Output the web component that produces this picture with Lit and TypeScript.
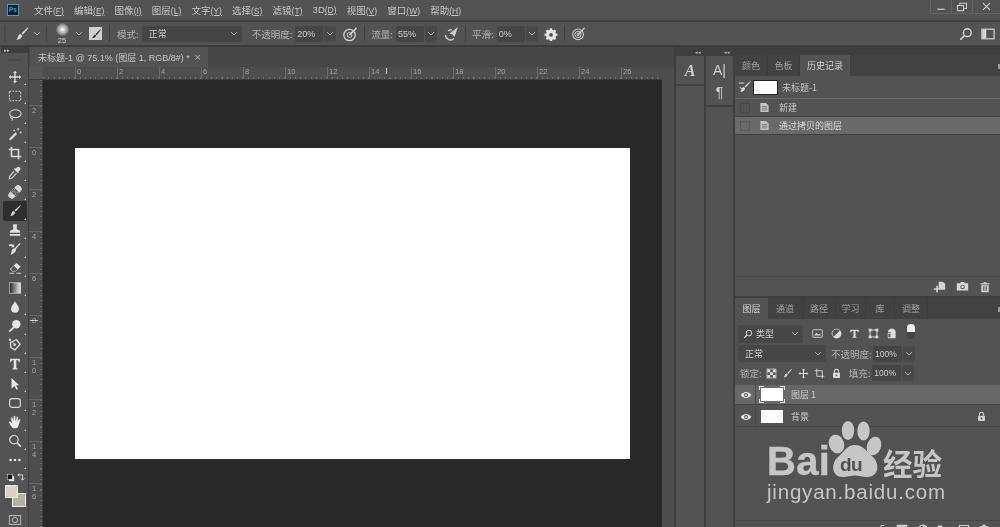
import { LitElement, html, css, svg } from "lit";
import { customElement } from "lit/decorators.js";

const s = (body: unknown, size = 16, vb = 16) => html`<svg class="ic" width=${size} height=${size} viewBox="0 0 ${vb} ${vb}">${body}</svg>`;
const brushPath = svg`<path fill="#d8d8d8" d="M13.6 1.6c.5-.3 1 .2.7.7L9 8.6 7.5 7.2zM6.7 7.9l1.5 1.5c-.2 2.2-2.5 4.2-6 4.4 1.400-1 1.400-2.200 2-3.800.4-1.100 1.300-1.900 2.500-2.100z"/>`;
const tick = html`<i class="corner"></i>`;
const moveIcon = svg`<path fill="#dcdcdc" d="M8 .8 10.300 3.400H8.800V7.200H12.600V5.700L15.200 8 12.600 10.300V8.800H8.800V12.600H10.300L8 15.200 5.700 12.600H7.200V8.800H3.400V10.300L.8 8 3.400 5.700V7.200H7.200V3.400H5.700z"/>`;

const toolIcons: unknown[] = [
  moveIcon,
  svg`<rect x="1.500" y="2.500" width="13" height="11" fill="none" stroke="#d0d0d0" stroke-width="1.200" stroke-dasharray="2 1.500"/>`,
  svg`<ellipse cx="8.500" cy="6.500" rx="6.500" ry="4.500" fill="none" stroke="#d0d0d0" stroke-width="1.300"/><path d="M4 9.500c-1.500 1-.8 2.500.5 2.300.8 0 .8 1.500-.3 2.500" fill="none" stroke="#d0d0d0" stroke-width="1.200"/>`,
  svg`<path d="M2 14.500 9.500 7" stroke="#d8d8d8" stroke-width="2.600"/><path d="M11.500 1v3M10 2.500h3M14.500 5v2.500M13.300 6.200h2.400M7 3v2M6 4h2" stroke="#e0e0e0" stroke-width=".9"/>`,
  svg`<path d="M4 .8V12H15.200M.8 4H12V15.200" fill="none" stroke="#dcdcdc" stroke-width="1.800"/>`,
  svg`<path fill="#d8d8d8" d="M10 1.800c1.200-1.400 3-1 3.700-.2.800.9.900 2.400-.4 3.600l-1.500 1.300.7.800-1.100 1-4.800-4.800 1-1.100.8.700z"/><path d="M7 5.800 2.200 11.500 1.500 14.500 4.500 13.800 9.600 8.400" fill="none" stroke="#d8d8d8" stroke-width="1.300"/>`,
  svg`<g transform="rotate(-45 8 8)"><rect x="-1" y="4" width="18" height="8" rx="3.700" fill="#d8d8d8"/><rect x="5" y="4" width="6" height="8" fill="#585858"/><path d="M6 6h1M9 6h1M7.500 8h1M6 10h1M9 10h1" stroke="#e0e0e0" stroke-width="1.100"/></g>`,
  svg`${brushPath}`,
  svg`<path fill="#e0e0e0" d="M5.800 1.500h4.400L10 6.500c0 1.300 3.800 1.500 3.800 3.500v1.200H2.200V10c0-2 3.800-2.200 3.800-3.500zM2 12.500h12V14.500H2z"/>`,
  svg`<path d="M8 8 13.800 1.500" stroke="#dcdcdc" stroke-width="1.500"/><path fill="#dcdcdc" d="M7.600 6.800l1.800 1.800c-.3 2.500-3.500 5.600-6.500 5.800 1.300-1.800 1-4 1.800-5.800zM1 3.500a3 3 0 0 1 5 0l1-1V6H3.500l1-1a2 2 0 0 0-2.700 0z"/>`,
  svg`<path fill="#e0e0e0" d="M9.700 2.200 14.500 6.500 8.800 12H5L2.200 9.200z"/><path fill="#585858" d="M6.700 5.400 11 9.300 8.800 11.300H5.400L3.300 9.200z"/><path d="M9.500 14H15M1.500 14H7" stroke="#dcdcdc" stroke-width="1"/>`,
  svg`<defs><linearGradient id="gr"><stop offset="0" stop-color="#222"/><stop offset="1" stop-color="#eee"/></linearGradient></defs><rect x="1.500" y="2" width="13" height="12" fill="url(#gr)" stroke="#cfcfcf" stroke-width=".8"/>`,
  svg`<path fill="#e4e4e4" d="M8 1.500C9 4 12.500 7 12.500 10a4.500 4.500 0 0 1-9 0C3.500 7 7 4 8 1.500z"/>`,
  svg`<circle cx="9.500" cy="6" r="4.800" fill="#e4e4e4"/><path d="M6.500 9.500 1.500 14.500" stroke="#e4e4e4" stroke-width="2"/>`,
  svg`<path d="M9.500 2 13.800 7 8 13.500 3.200 11 2.700 5z" fill="none" stroke="#dcdcdc" stroke-width="1.500"/><circle cx="7.600" cy="7.600" r="1.500" fill="#dcdcdc"/><path d="M3 3l4 3.500" stroke="#dcdcdc"/><circle cx="2.200" cy="2" r="1.300" fill="#dcdcdc"/>`,
  svg`<path fill="#e2e2e2" d="M2.500 2H13.500V6H12.500C12.300 4.300 11.300 3.500 9.500 3.500V12.300C9.500 13 10.300 13.200 11 13.200V14.200H5V13.200C5.700 13.200 6.500 13 6.500 12.300V3.500C4.700 3.500 3.700 4.300 3.500 6H2.500z"/>`,
  svg`<path fill="#e8e8e8" d="M4 1.200 12.800 9.500H9.300L11.300 13.800 9.500 14.700 7.500 10.300 4 13z"/>`,
  svg`<rect x="1.800" y="3" width="12.400" height="10" rx="3" fill="none" stroke="#d8d8d8" stroke-width="1.300"/>`,
  svg`<path fill="#ececec" d="M5.500 15C4 13.500 1.500 9.500 1.200 8.500c-.3-1 .8-1.600 1.600-.8L4.500 9.500 3.500 3.500c-.1-1.200 1.400-1.300 1.700-.2L6.300 7 6.500 1.800c.1-1.100 1.600-1.100 1.700 0L8.700 7 10 2.500c.3-1 1.700-.8 1.600.3L10.800 7.800 12.500 5c.6-.9 1.900-.4 1.500.6L11.800 12.500c-.4 1.500-1.300 2.500-2.300 2.500z"/>`,
  svg`<circle cx="6.800" cy="6.500" r="4.800" fill="none" stroke="#dcdcdc" stroke-width="1.400"/><path d="M10.300 10 14.800 14.500" stroke="#dcdcdc" stroke-width="2"/>`,
  svg`<circle cx="3" cy="8" r="1.500" fill="#e4e4e4"/><circle cx="8" cy="8" r="1.500" fill="#e4e4e4"/><circle cx="13" cy="8" r="1.500" fill="#e4e4e4"/>`,
];

const layerTabs = ["图层", "通道", "路径", "学习", "库", "调整"];
const menus: [string, string][] = [["文件", "(F)"], ["编辑", "(E)"], ["图像", "(I)"], ["图层", "(L)"], ["文字", "(Y)"], ["选择", "(S)"], ["滤镜", "(T)"], ["3D", "(D)"], ["视图", "(V)"], ["窗口", "(W)"], ["帮助", "(H)"]];

const chev = html`<svg class="chev" width="8" height="5" viewBox="0 0 8 5"><path d="M1 1 4 4 7 1" fill="none" stroke="#b0b0b0" stroke-width="1"/></svg>`;
const target = svg`<circle cx="7.500" cy="9" r="5.700" fill="none" stroke="#d0d0d0" stroke-width="1.300"/><circle cx="7.500" cy="9" r="2.400" fill="none" stroke="#d0d0d0"/><path d="M7.500 9 14.500 2" stroke="#d0d0d0" stroke-width="1.600"/>`;
const eye = s(svg`<path fill="#e8e8e8" d="M1 8c2-3 4.500-4 7-4s5 1 7 4c-2 3-4.500 4-7 4S3 11 1 8z"/><circle cx="8" cy="8" r="2.600" fill="#4a4a4a"/><circle cx="8" cy="8" r="1.300" fill="#e8e8e8"/>`, 12);
const lock = (c = "#d8d8d8") => s(svg`<path d="M5 7V4.800a3 3 0 0 1 6 0V7" fill="none" stroke=${c} stroke-width="1.500"/><rect x="3" y="7" width="10" height="7.500" rx="1" fill=${c}/><rect x="7" y="9.500" width="2" height="2.500" fill="#4a4a4a"/>`, 11);
const doc = s(svg`<path fill="#c4c4c4" d="M2 1.500H10L14 5V14.500H2z"/><path d="M4 6.500h8M4 9h8M4 11.500h8" stroke="#666" stroke-width="1.100"/>`, 11);

@customElement("app-root")
export class AppRoot extends LitElement {
  static styles = css`
    :host { display: flex; flex-direction: column; width: 1000px; height: 527px; overflow: hidden; position: relative;
      background: #535353; color: #c6c6c6; font: 9px "Noto Sans CJK SC", "Liberation Sans", sans-serif; filter: blur(.35px); }
    svg { display: block; flex: none; }
    .menu { height: 19px; padding-bottom: 1px; flex: none; display: flex; align-items: center; border-bottom: 2px solid #3f3f3f; }
    .logo { width: 12px; height: 12px; box-sizing: border-box; margin: 0 15px 0 7px; background: #001d26; border: 1px solid #2fa3d6; color: #31a8e0; font: bold 6.500px/10px "Liberation Sans", sans-serif; text-align: center; flex: none; }
    .menu-item { margin-right: 10.200px; white-space: nowrap; color: #c8c8c8; font: 9.500px "Liberation Sans", "Noto Sans CJK SC", sans-serif; }
    .menu-item u { font-size: 8.500px; }
    .win { margin-left: auto; display: flex; height: 13px; align-self: flex-start; border: 1px solid #636363; border-top: 0; border-right: 0; }
    .win > div { width: 20px; display: flex; align-items: center; justify-content: center; border-left: 1px solid #636363; }
    .win > div:first-child { border-left: 0; }
    .win > div:last-child { width: 27px; }

    .opts { height: 23px; flex: none; display: flex; align-items: center; border-bottom: 2px solid #3c3c3c; }
    .grip { width: 2px; height: 17px; background: #484848; margin: 0 8px 0 4px; }
    .sep { width: 1px; height: 17px; background: #404040; flex: none; }
    .lbl { white-space: nowrap; color: #b4b4b4; font-size: 9.500px; }
    .field { height: 16px; background: #454545; border-radius: 2px; display: flex; align-items: center; box-sizing: border-box; padding-left: 2px; color: #cfcfcf; font-size: 9px; font-family: "Liberation Sans", "Noto Sans CJK SC", sans-serif; flex: none; }
    .num { width: 28px; margin-left: 3px; }
    .num-arrow { width: 12px; height: 16px; background: #484848; margin-left: 1px; display: flex; align-items: center; justify-content: center; border-radius: 2px; flex: none; }
    .m6 { margin: 0 6px; }
    .mr6 { margin-right: 6px; }
    .chev-a { margin: 0 5px 0 3px; }
    .preview { width: 26px; height: 23px; display: flex; flex-direction: column; align-items: center; margin-left: 2px; }
    .preview i { width: 13px; height: 13px; margin-top: 1px; border-radius: 50%; background: radial-gradient(#fff, #9a9a9a 50%, #535353 78%); }
    .preview span { font: 7.500px/9px "Liberation Sans", sans-serif; color: #d0d0d0; }
    .brush-toggle { width: 13px; height: 13px; background: #d0d0d0; margin-left: 6px; display: flex; align-items: center; justify-content: center; }
    .sep-b { margin: 0 7px; }
    .mode { width: 100px; margin-left: 3px; padding-left: 7px; justify-content: space-between; padding-right: 4px; font-family: "Noto Sans CJK SC", sans-serif; }
    .gap10 { margin-left: 10px; }
    .o-right { margin-left: auto; display: flex; gap: 8px; margin-right: 5px; align-items: center; }

    .main { flex: 1; display: flex; min-height: 0; }
    .tools { width: 29px; padding-left: 1px; flex: none; display: flex; flex-direction: column; align-items: center; background: #535353; border-right: 1px solid #3f3f3f; box-sizing: border-box; position: relative; }
    .tools-head { height: 6px; width: 100%; background: #3f3f3f; color: #ccc; font-size: 5px; line-height: 6px; padding-left: 3px; box-sizing: border-box; flex: none; }
    .tools-grip { height: 2px; width: 14px; margin: 6px 0 6px; background: #484848; flex: none; }
    .tool { width: 24px; height: 19.200px; flex: none; display: flex; align-items: center; justify-content: center; position: relative; border-radius: 2px; }
    .tool.on { background: #2f2f2f; }
    .corner { position: absolute; right: 1px; bottom: 1px; width: 0; height: 0; border-left: 2px solid transparent; border-bottom: 2px solid #c4c4c4; }
    .swatch-row { display: flex; justify-content: space-between; width: 18px; margin-top: 3px; height: 11px; flex: none; }
    .swatches { width: 24px; height: 25px; position: relative; margin-top: 1px; flex: none; }
    .fg, .bg { position: absolute; box-sizing: border-box; }
    .fg { left: 2px; top: 0; width: 13px; height: 13px; background: #d5d3c4; border: 1px solid #eee; z-index: 1; }
    .bg { left: 9px; top: 8px; width: 14px; height: 14px; background: #b7b39a; border: 1px solid #eee; }
    .qmask { margin-top: 3px; }

    .work { flex: 1; min-width: 0; display: flex; flex-direction: column; }
    .tabbar { height: 20px; flex: none; background: #474747; display: flex; padding-left: 1px; }
    .doc-tab { width: 178px; background: #535353; display: flex; align-items: center; justify-content: space-between; padding: 0 7px 0 8px; box-sizing: border-box; font: 9px "Liberation Sans", "Noto Sans CJK SC", sans-serif; color: #c8c8c8; white-space: nowrap; }
    .doc-tab b { font-weight: normal; font-size: 11px; color: #b0b0b0; }
    .ruler-h { height: 13px; flex: none; display: flex; background: #4e4e4e; border-bottom: 1px solid #3c3c3c; box-sizing: border-box; overflow: hidden; }
    .ruler-corner { width: 14px; flex: none; background: #575757; }
    .ruler-track { width: 619px; display: flex; padding-left: 32px; box-sizing: border-box; flex: none; background-image: repeating-linear-gradient(90deg, #707070 0 1px, transparent 1px 5.250px); background-size: 100% 2px; background-repeat: no-repeat; background-position: bottom; }
    .rh { width: 42px; flex: none; border-left: 1px solid #6a6a6a; box-sizing: border-box; font: 7.500px/9px "Liberation Sans", sans-serif; color: #a8a8a8; padding-left: 1px; position: relative; }
    .rh.cursor::after { content: ""; position: absolute; left: 16px; top: 1px; width: 1px; height: 6px; background: #cfcfcf; }
    .below { flex: 1; display: flex; min-height: 0; }
    .ruler-v { width: 14px; flex: none; background: #4e4e4e; overflow: hidden; border-right: 1px solid #3c3c3c; box-sizing: border-box; padding-top: 25px; background-image: repeating-linear-gradient(180deg, #6c6c6c 0 1px, transparent 1px 5.250px); background-size: 2px 100%; background-repeat: no-repeat; background-position: right; }
    .rv { height: 42px; border-top: 1px solid #666; box-sizing: border-box; font: 7.500px/8px "Liberation Sans", sans-serif; color: #a8a8a8; padding: 1px 0 0 3px; white-space: pre-line; position: relative; }
    .rv.cursor::after { content: ""; position: absolute; left: 1px; top: 4px; width: 8px; height: 1px; background: #cfcfcf; }
    .canvas { width: 619px; flex: none; background: #282828; display: flex; padding: 68px 0 0 32px; box-sizing: border-box; }
    .page { width: 555px; height: 311px; background: #fff; }

    .dock { width: 338px; flex: none; display: flex; background: #3f3f3f; }
    .dock-gap { width: 12px; flex: none; background: linear-gradient(#474747 0 20px, #4e4e4e 20px); border-right: 1px solid #3f3f3f; box-sizing: content-box; }
    .strip { flex: none; display: flex; flex-direction: column; box-sizing: border-box; }
    .strip-a { width: 28px; margin-left: 1px; }
    .strip-b { width: 27px; margin-left: 2px; }
    .strip-head { height: 9px; flex: none; font-size: 5px; line-height: 9px; color: #bbb; text-align: right; padding-right: 3px; }
    .strip-cell { background: #535353; display: flex; flex-direction: column; align-items: center; gap: 7px; padding-top: 7px; box-sizing: border-box; border-bottom: 2px solid #404040; flex: none; }
    .cell-a { height: 30px; }
    .cell-b { height: 51px; }
    .strip-rest { background: #535353; flex: 1; }
    .glyph-a { font: italic bold 16px/16px "Liberation Serif", serif; color: #d0d0d0; }
    .glyph-b { font: 14px/15px "Liberation Sans", sans-serif; color: #d0d0d0; }
    .panels { flex: 1; margin-left: 2px; display: flex; flex-direction: column; padding-top: 8px; min-width: 0; }
    .history { height: 241px; flex: none; display: flex; flex-direction: column; background: #535353; position: relative; }
    .tabs { height: 21px; flex: none; display: flex; background: #424242; }
    .tab { display: flex; align-items: center; justify-content: center; color: #a2a2a2; border-right: 1px solid #3c3c3c; box-sizing: border-box; font-size: 9px; white-space: nowrap; }
    .tab.on { background: #535353; color: #d4d4d4; border-right: 0; }
    .snap { height: 22px; flex: none; display: flex; align-items: center; border-bottom: 1px solid #6a6a6a; padding-left: 3px; }
    .thumb { background: #fff; flex: none; }
    .snap .thumb { width: 23px; height: 13px; margin: 0 5px 0 2px; outline: 1px solid #222; }
    .hrow { height: 17px; flex: none; display: flex; align-items: center; border-bottom: 1px solid #424242; padding-left: 5px; color: #c8c8c8; }
    .hrow.on { background: #6a6a6a; color: #dcdcdc; }
    .check { width: 8px; height: 8px; border: 1px solid #484848; margin-right: 9px; flex: none; }
    .hrow.on .check { border-color: #5c5c5c; }
    .hrow .ic { margin-right: 9px; }
    .hist-space { flex: 1; }
    .hist-foot { height: 19px; flex: none; display: flex; justify-content: flex-end; align-items: center; gap: 10px; padding-right: 9px; border-top: 1px solid #484848; }
    .layers { flex: 1; background: #535353; border-top: 2px solid #3e3e3e; display: flex; flex-direction: column; position: relative; }
    .filter { display: flex; align-items: center; height: 19px; margin: 5px 0 0 3px; flex: none; }
    .sel { height: 18px; background: #474747; border-radius: 2px; display: flex; align-items: center; justify-content: space-between; padding: 0 4px 0 5px; box-sizing: border-box; color: #cfcfcf; flex: none; }
    .filter .sel { width: 65px; }
    .filter .sel span { display: flex; align-items: center; gap: 3px; }
    .ficons { display: flex; gap: 7.500px; margin-left: 9px; align-items: center; }
    .toggle { width: 8px; height: 15px; margin-left: 2px; border-radius: 4px; background: linear-gradient(#eee 0 8px, #444 8px); margin-top: -4px; }
    .mode-row { display: flex; align-items: center; height: 17px; margin: 2px 0 0 3px; flex: none; }
    .mode-row .sel { width: 88px; height: 17px; padding-left: 7px; }
    .mode-row .lbl { margin-left: 5px; width: 42px; }
    .lock-row { display: flex; align-items: center; height: 16px; margin: 3px 0 0 5px; flex: none; }
    .lock-row .lic { display: flex; gap: 5.250px; margin: 0 7px 0 4px; align-items: center; }
    .pct { width: 29px; height: 16px; background: #454545; border-radius: 2px; display: flex; align-items: center; padding-left: 2px; box-sizing: border-box; font: 8.500px "Liberation Sans", sans-serif; color: #cfcfcf; flex: none; }
    .pct-fill { margin-left: 2px; }
    .layer-list { margin-top: 4px; display: flex; flex-direction: column; gap: 2px; flex: none; }
    .lrow { height: 19px; display: flex; align-items: center; border-bottom: 1px solid #464646; color: #cfcfcf; }
    .lrow.on { background: #686868; }
    .eye { width: 21px; display: flex; justify-content: center; padding-left: 2px; box-sizing: border-box; align-self: stretch; align-items: center; border-right: 1px solid #484848; }
    .lrow .thumb { width: 22px; height: 13px; margin: 0 8px 0 5px; position: relative; }
    .lrow.on .thumb::before { content: ""; position: absolute; inset: -2px -2px; background:
      linear-gradient(#e0e0e0, #e0e0e0) 0 0 / 5px 1px no-repeat, linear-gradient(#e0e0e0, #e0e0e0) 0 0 / 1px 4px no-repeat,
      linear-gradient(#e0e0e0, #e0e0e0) 100% 0 / 5px 1px no-repeat, linear-gradient(#e0e0e0, #e0e0e0) 100% 0 / 1px 4px no-repeat,
      linear-gradient(#e0e0e0, #e0e0e0) 0 100% / 5px 1px no-repeat, linear-gradient(#e0e0e0, #e0e0e0) 0 100% / 1px 4px no-repeat,
      linear-gradient(#e0e0e0, #e0e0e0) 100% 100% / 5px 1px no-repeat, linear-gradient(#e0e0e0, #e0e0e0) 100% 100% / 1px 4px no-repeat; }
    .lrow .lk { margin-left: auto; margin-right: 13px; }
    .menu-dots { position: absolute; right: 0; top: 9px; width: 2px; height: 5px; background: #9a9a9a; }
    .l-foot { position: absolute; left: 0; right: 0; bottom: -8px; height: 15px; padding-top: 3px; box-sizing: border-box; border-top: 1px solid #484848; display: flex; justify-content: flex-end; gap: 8.500px; padding-right: 10px; }

    .wm { position: absolute; left: 766px; top: 419px; width: 182px; height: 90px; color: #c6c6c6; pointer-events: none; }
    .wm-bai { position: absolute; left: 1px; top: 19px; font: bold 40px/46px "Liberation Sans", sans-serif; letter-spacing: .3px; -webkit-text-stroke: .4px #c6c6c6; }
    .wm-paw { position: absolute; left: 62px; top: 2px; }
    .wm-du { position: absolute; left: 74px; top: 35px; font: bold 19px/22px "Liberation Sans", sans-serif; letter-spacing: -.5px; color: #505050; }
    .wm-cn { position: absolute; left: 117px; top: 25px; font: bold 29.500px/36px "Noto Sans CJK SC", sans-serif; white-space: nowrap; }
    .wm-url { position: absolute; left: 1px; top: 60px; font: 20.500px/26px "Liberation Sans", sans-serif; letter-spacing: .8px; white-space: nowrap; }
  `;

  render() {
    const hRuler = [0, 2, 4, 6, 8, 10, 12, 14, 16, 18, 20, 22, 24, 26];
    const vRuler = ["2", "0", "2", "4", "6", "8", "1\n0", "1\n2", "1\n4", "1\n6"];
    const tabW = [33, 32, 50];
    const layW = [33, 35, 33, 30, 29, 33];
    return html`
      <div class="menu">
        <div class="logo">Ps</div>
        ${menus.map(([a, b]) => html`<span class="menu-item">${a}<u>${b}</u></span>`)}
        <div class="win">
          <div>${s(svg`<path d="M3 11H13" stroke="#cfcfcf" stroke-width="1.600"/>`, 12)}</div>
          <div>${s(svg`<rect x="2" y="6" width="8" height="7" fill="none" stroke="#cfcfcf" stroke-width="1.400"/><path d="M5 5V3H14V10H11" fill="none" stroke="#cfcfcf" stroke-width="1.400"/>`, 12)}</div>
          <div>${s(svg`<path d="M3 3 13 13M13 3 3 13" stroke="#cfcfcf" stroke-width="1.700"/>`, 11)}</div>
        </div>
      </div>
      <div class="opts">
        <div class="grip"></div>
        ${s(brushPath, 16)}
        <span class="chev-a">${chev}</span>
        <div class="sep"></div>
        <div class="preview"><i></i><span>25</span></div>
        ${chev}
        <div class="brush-toggle">${s(svg`<path fill="#3a3a3a" d="M13.600 1.600 7.500 8 9 9.500 14.400 2.400zM6.700 8.500c-2 .5-2 3.500-4.500 5 3.500.2 6-1.500 6-3.500z"/>`, 12)}</div>
        <div class="sep sep-b"></div>
        <span class="lbl">模式:</span>
        <div class="field mode"><span>正常</span>${chev}</div>
        <span class="lbl gap10">不透明度:</span>
        <div class="field num">20%</div><div class="num-arrow">${chev}</div>
        <span class="m6">${s(target, 16)}</span>
        <div class="sep mr6"></div>
        <span class="lbl">流量:</span>
        <div class="field num">55%</div><div class="num-arrow">${chev}</div>
        <span class="m6">${s(svg`<path d="M2.500 9a5 5 0 0 0 8.500 3.500M5 5a5 5 0 0 1 4-1" fill="none" stroke="#cfcfcf" stroke-width="1.300"/><path fill="#cfcfcf" d="M15 1 11.500 11 9.500 8.500 6.500 7.500z"/>`, 16)}</span>
        <div class="sep mr6"></div>
        <span class="lbl">平滑:</span>
        <div class="field num">0%</div><div class="num-arrow">${chev}</div>
        <span class="m6">${s(svg`<path fill="#e6e6e6" d="M6.800 1.500h2.400l.3 1.800 1.300.6 1.500-1 1.700 1.700-1 1.500.6 1.300 1.800.3v2.400l-1.800.3-.6 1.300 1 1.500-1.700 1.700-1.500-1-1.300.6-.3 1.800H6.800l-.3-1.800-1.300-.6-1.500 1-1.700-1.700 1-1.500-.6-1.300-1.800-.3V7.700l1.800-.3.6-1.300-1-1.500 1.700-1.700 1.500 1 1.300-.6z"/><circle cx="8" cy="9" r="2.200" fill="#535353"/>`, 14)}</span>
        <div class="sep mr6"></div>
        ${s(svg`<circle cx="7.500" cy="9" r="5.700" fill="none" stroke="#cfcfcf" stroke-width="1.100"/><circle cx="7.500" cy="9" r="3.400" fill="none" stroke="#cfcfcf"/><circle cx="7.500" cy="9" r="1.300" fill="none" stroke="#cfcfcf"/><path d="M7.500 9 14.500 2" stroke="#cfcfcf" stroke-width="1.500"/>`, 15)}
        <div class="o-right">
          ${s(svg`<circle cx="9.500" cy="6.500" r="4.500" fill="none" stroke="#e0e0e0" stroke-width="1.500"/><path d="M6 10 1.500 14.500" stroke="#e0e0e0" stroke-width="1.700"/>`, 14)}
          ${s(svg`<rect x="1" y="2.500" width="14" height="11" fill="none" stroke="#d8d8d8" stroke-width="1.300"/><rect x="1.500" y="3" width="4.500" height="10" fill="#d8d8d8"/>`, 14)}
        </div>
      </div>
      <div class="main">
        <div class="tools">
          <div class="tools-head">▸▸</div>
          <div class="tools-grip"></div>
          ${toolIcons.map((ic, i) => html`<div class="tool ${i === 7 ? "on" : ""}">${s(ic, 14)}${tick}</div>`)}
          <div class="swatch-row">
            ${s(svg`<rect x="5" y="5" width="8" height="8" fill="#eee"/><rect x="2" y="2" width="8" height="8" fill="#111" stroke="#ddd"/>`, 10)}
            ${s(svg`<path d="M3 3H10.500V11M8 8.500 10.500 11.500 13.500 8.500M5.500 .8 3 3 5.500 5.500" fill="none" stroke="#d8d8d8" stroke-width="1.500"/>`, 10)}
          </div>
          <div class="swatches"><div class="fg"></div><div class="bg"></div></div>
          <div class="qmask">${s(svg`<rect x="1.500" y="3" width="13" height="10" fill="none" stroke="#c8c8c8" stroke-width="1"/><circle cx="8" cy="8" r="3" fill="none" stroke="#c8c8c8"/>`, 14)}</div>
        </div>
        <div class="work">
          <div class="tabbar"><div class="doc-tab"><span>未标题-1 @ 75.1% (图层 1, RGB/8#) *</span><b>×</b></div></div>
          <div class="ruler-h">
            <div class="ruler-corner"></div>
            <div class="ruler-track">${hRuler.map((n) => html`<div class="rh ${n === 14 ? "cursor" : ""}">${n}</div>`)}</div>
          </div>
          <div class="below">
            <div class="ruler-v">
              ${vRuler.map((t, i) => html`<div class="rv ${i === 5 ? "cursor" : ""}">${t}</div>`)}
            </div>
            <div class="canvas"><div class="page"></div></div>
          </div>
        </div>
        <div class="dock">
          <div class="dock-gap"></div>
          <div class="strip strip-a">
            <div class="strip-head">◂◂</div>
            <div class="strip-cell cell-a"><span class="glyph-a">A</span></div>
            <div class="strip-rest"></div>
          </div>
          <div class="strip strip-b">
            <div class="strip-head">◂◂</div>
            <div class="strip-cell cell-b"><span class="glyph-b">A|</span><span class="glyph-b">¶</span></div>
            <div class="strip-rest"></div>
          </div>
          <div class="panels">
            <div class="history">
              <div class="tabs">
                ${["颜色", "色板", "历史记录"].map((t, i) => html`<div class="tab ${i === 2 ? "on" : ""}" style="width:${tabW[i]}px">${t}</div>`)}
              </div>
              <div class="menu-dots"></div>
              <div class="snap">
                ${s(svg`<path d="M1 3.500 7 3.500M2 8l4 4" stroke="#d8d8d8" stroke-width="1.200"/>${brushPath}`, 14)}
                <div class="thumb"></div>
                <span>未标题-1</span>
              </div>
              <div class="hrow"><div class="check"></div>${doc}<span>新建</span></div>
              <div class="hrow on"><div class="check"></div>${doc}<span>通过拷贝的图层</span></div>
              <div class="hist-space"></div>
              <div class="hist-foot">
                ${s(svg`<path fill="#d4d4d4" d="M7 2H12L15 5V12H7zM1 10H4V7H6V10H9V12H6V15H4V12H1z"/>`, 13)}
                ${s(svg`<path fill="#d8d8d8" d="M1 4H5L6 2.500H10L11 4H15V13H1z"/><circle cx="8" cy="8.500" r="2.800" fill="#535353"/><circle cx="8" cy="8.500" r="1.600" fill="#d8d8d8"/>`, 13)}
                ${s(svg`<path fill="#d0d0d0" d="M6 1.500H10V3H14V4.500H2V3H6zM3 5.500H13V15H3z"/><path d="M6 7v6M8 7v6M10 7v6" stroke="#535353"/>`, 12)}
              </div>
            </div>
            <div class="layers">
              <div class="tabs">
                ${layerTabs.map((t, i) => html`<div class="tab ${i === 0 ? "on" : ""}" style="width:${layW[i]}px">${t}</div>`)}
              </div>
              <div class="menu-dots"></div>
              <div class="filter">
                <div class="sel"><span>${s(svg`<circle cx="9.500" cy="6.500" r="4.500" fill="none" stroke="#ddd" stroke-width="1.500"/><path d="M6 10 2 14" stroke="#ddd" stroke-width="1.700"/>`, 10)}类型</span>${chev}</div>
                <div class="ficons">
                  ${s(svg`<rect x="1" y="2.500" width="14" height="11" rx="1" fill="none" stroke="#d4d4d4" stroke-width="1.300"/><path fill="#d4d4d4" d="M3 11 6.500 7 9 9.500 11 8 13 11z"/>`, 11)}
                  ${s(svg`<circle cx="8" cy="8" r="6.500" fill="none" stroke="#ddd"/><path fill="#ddd" d="M13 3.500A6.500 6.500 0 0 1 3.500 13z"/>`, 11)}
                  ${s(svg`<path fill="#ddd" d="M2 2.500H14V6H12.800C12.500 4.500 11.500 4 9.500 4V12.500L11 13V14H5V13L6.500 12.500V4C4.500 4 3.500 4.500 3.200 6H2z"/>`, 11)}
                  ${s(svg`<rect x="3" y="3" width="10" height="10" fill="none" stroke="#ddd" stroke-width="1.300"/><rect x="1" y="1" width="4" height="4" fill="#ddd"/><rect x="11" y="1" width="4" height="4" fill="#ddd"/><rect x="1" y="11" width="4" height="4" fill="#ddd"/><rect x="11" y="11" width="4" height="4" fill="#ddd"/>`, 11)}
                  ${s(svg`<path fill="#ddd" d="M6 1H11L14 4V15H3V9H7V6H3V4z"/><rect x="3" y="8" width="4" height="6" fill="#535353" stroke="#ddd"/>`, 11)}
                  <div class="toggle"></div>
                </div>
              </div>
              <div class="mode-row">
                <div class="sel"><span>正常</span>${chev}</div>
                <span class="lbl">不透明度:</span>
                <div class="pct">100%</div><div class="num-arrow">${chev}</div>
              </div>
              <div class="lock-row">
                <span class="lbl">锁定:</span>
                <div class="lic">
                  ${s(svg`<rect x="1.500" y="1.500" width="13" height="13" fill="#555" stroke="#ddd"/><path fill="#ddd" d="M2 2h4v4H2zM10 2h4v4h-4zM6 6h4v4H6zM2 10h4v4H2zM10 10h4v4h-4z"/>`, 11)}
                  ${s(brushPath, 11)}
                  ${s(moveIcon, 11)}
                  ${s(svg`<path d="M4 1V12H15M1 4H12V15" fill="none" stroke="#dcdcdc" stroke-width="1.300"/>`, 11)}
                  ${lock("#e0e0e0")}
                </div>
                <span class="lbl">填充:</span>
                <div class="pct pct-fill">100%</div><div class="num-arrow">${chev}</div>
              </div>
              <div class="layer-list">
                <div class="lrow on"><div class="eye">${eye}</div><div class="thumb"></div><span>图层 1</span></div>
                <div class="lrow"><div class="eye">${eye}</div><div class="thumb"></div><span>背景</span><span class="lk">${lock("#d0d0d0")}</span></div>
              </div>
              <div class="l-foot">
                ${s(svg`<path d="M1 8a3 3 0 0 1 6 0 3 3 0 0 0 6 0" fill="none" stroke="#c8c8c8" stroke-width="1.500"/>`, 12)}
                ${s(svg`<path d="M4 14 7 2H11M3 6H9M9 6 14 14M14 6 9 14" fill="none" stroke="#c8c8c8" stroke-width="1.500"/>`, 12)}
                ${s(svg`<rect x="1" y="1" width="14" height="14" fill="#d0d0d0"/><circle cx="8" cy="8" r="4" fill="#535353"/>`, 12)}
                ${s(svg`<circle cx="8" cy="8" r="6.500" fill="none" stroke="#d0d0d0" stroke-width="1.500"/><path fill="#d0d0d0" d="M8 2A6 6 0 0 1 8 14z"/>`, 12)}
                ${s(svg`<path fill="#d0d0d0" d="M1 2H6L8 4H15V14H1z"/>`, 12)}
                ${s(svg`<path fill="none" stroke="#d0d0d0" stroke-width="1.500" d="M2 2H14V14H2z"/>`, 12)}
                ${s(svg`<path fill="#d0d0d0" d="M6 1H10V3H14V4.500H2V3H6zM3 5.500H13V15H3z"/>`, 12)}
              </div>
            </div>
          </div>
        </div>
      </div>
      <div class="wm">
        <span class="wm-bai">Bai</span>
        <svg class="wm-paw" width="56" height="58" viewBox="0 0 56 58">
          <ellipse cx="8.500" cy="23" rx="7.500" ry="9.500" fill="#c6c6c6" transform="rotate(-20 8.500 23)" />
          <ellipse cx="20" cy="9.500" rx="6.200" ry="9.500" fill="#c6c6c6" />
          <ellipse cx="35.500" cy="10" rx="6.200" ry="9.500" fill="#c6c6c6" />
          <ellipse cx="46" cy="25" rx="7" ry="9.500" fill="#c6c6c6" transform="rotate(20 46 25)" />
          <path fill="#c6c6c6" d="M27 24C19 24 17 30 10 36 3 42 3 56 15 56 20 56 23 54.500 27 54.500 31 54.500 34 56 39 56 51 56 52 43 45 36 38 30 35 24 27 24z" />
        </svg>
        <span class="wm-du">du</span>
        <span class="wm-cn">经验</span>
        <span class="wm-url">jingyan.baidu.com</span>
      </div>
    `;
  }
}
